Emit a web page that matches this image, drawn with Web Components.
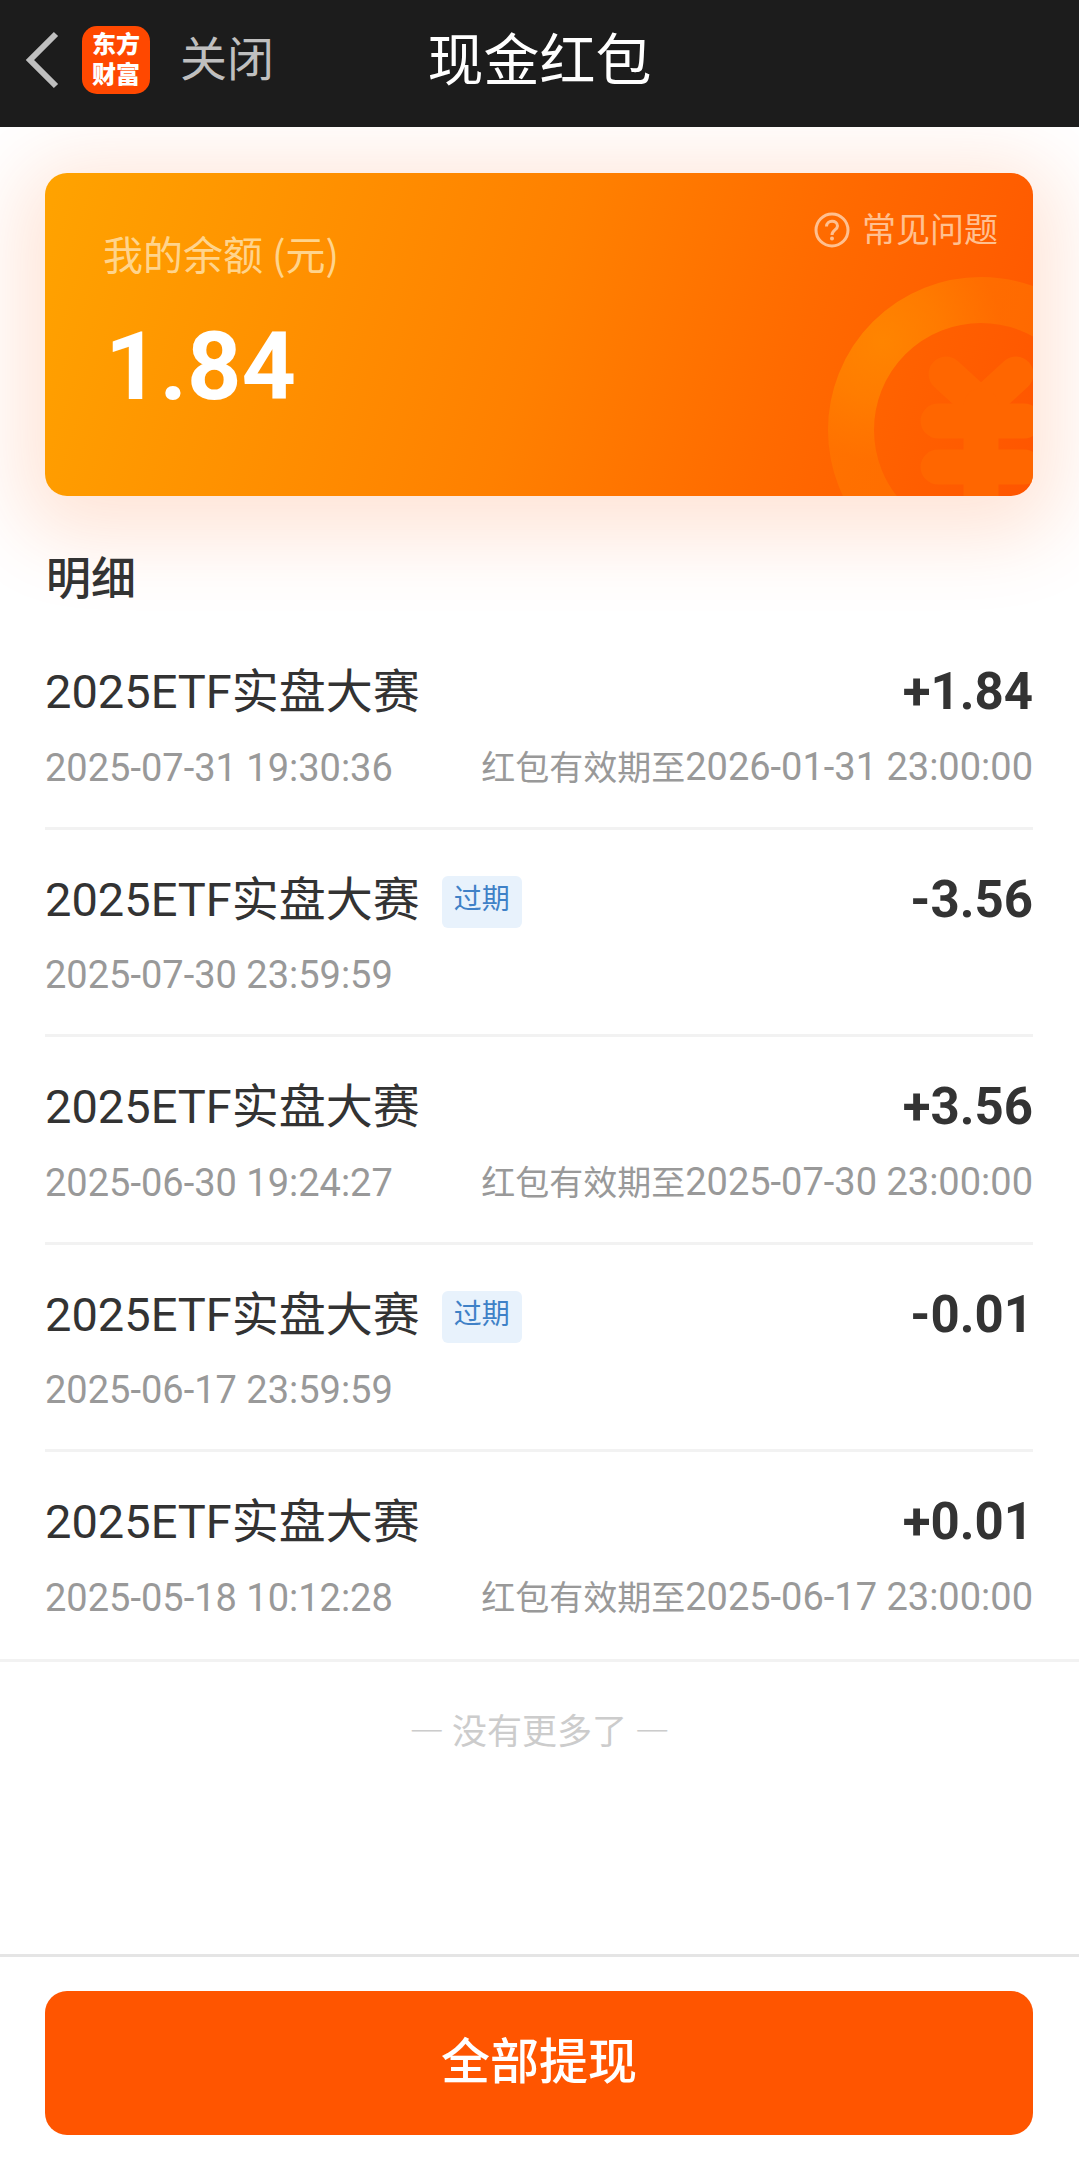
<!DOCTYPE html>
<html lang="zh-CN">
<head>
  <meta charset="utf-8">
  <meta name="viewport" content="width=device-width, initial-scale=1">
  <title>现金红包</title>
  <style>
    body {
      margin: 0;
      background-color: #fff;
      color: #333;
      font-family: Roboto, "Noto Sans CJK SC", sans-serif;
    }
  </style>
</head>
<body>
<cash-page>
  <page-header slot="header">现金红包</page-header>
  <balance-card amount="1.84">我的余额 (元)</balance-card>
  <record-list heading="明细">
    <record-item time="2025-07-31 19:30:36" amount="+1.84" expires="2026-01-31 23:00:00">2025ETF实盘大赛</record-item>
    <record-item time="2025-07-30 23:59:59" amount="-3.56" tag="过期">2025ETF实盘大赛</record-item>
    <record-item time="2025-06-30 19:24:27" amount="+3.56" expires="2025-07-30 23:00:00">2025ETF实盘大赛</record-item>
    <record-item time="2025-06-17 23:59:59" amount="-0.01" tag="过期">2025ETF实盘大赛</record-item>
    <record-item time="2025-05-18 10:12:28" amount="+0.01" expires="2025-06-17 23:00:00">2025ETF实盘大赛</record-item>
  </record-list>
  <withdraw-bar slot="footer">全部提现</withdraw-bar>
</cash-page>

<script>
const makeTemplate = (html) => {
  const template = document.createElement('template');
  template.innerHTML = html;
  return template;
};

const pageTemplate = makeTemplate(`
    <style>
      :host {
        min-height: 100vh;
        display: flex;
        flex-direction: column;
      }

      main {
        flex: 1;
      }
    </style>

    <slot name="header"></slot>
    <main><slot></slot></main>
    <slot name="footer"></slot>
`);

class CashPage extends HTMLElement {
  constructor() {
    super();
    this.attachShadow({ mode: 'open' });
    this.shadowRoot.appendChild(pageTemplate.content.cloneNode(true));
  }
}

const headerTemplate = makeTemplate(`
    <style>
      :host {
        display: block;
        position: relative;
        z-index: 1;
        background-color: #1c1c1c;
      }

      header {
        display: grid;
        grid-template-columns: 1fr auto 1fr;
        align-items: center;
        padding: 24px 24px 31px;
      }

      nav {
        display: flex;
        align-items: center;
      }

      button {
        margin: 0;
        padding: 0;
        border: 0;
        background: none;
        color: #bfbfbf;
        font: inherit;
        font-size: 47px;
        line-height: 72px;
      }

      .back svg {
        display: block;
      }

      .logo {
        width: 68px;
        height: 68px;
        box-sizing: border-box;
        padding: 4px 10px;
        margin: 0 30px 0 22px;
        border-radius: 15px;
        background-color: #ff4800;
        color: #fff;
        font-size: 24px;
        font-weight: 900;
        line-height: 30px;
        text-decoration: none;
      }

      h1 {
        margin: 2px 0 0;
        color: #fff;
        font-size: 56px;
        font-weight: 400;
        line-height: 70px;
      }
    </style>

    <header>
      <nav>
        <button class="back" type="button" aria-label="返回">
          <svg width="36" height="60" viewBox="0 0 36 60" fill="none" stroke="#bfbfbf" stroke-width="6">
            <path d="M32 4 L6 30 L32 56"/>
          </svg>
        </button>
        <a class="logo" href="#">东方财富</a>
        <button type="button">关闭</button>
      </nav>
      <h1><slot></slot></h1>
    </header>
`);

class PageHeader extends HTMLElement {
  constructor() {
    super();
    this.attachShadow({ mode: 'open' });
    this.shadowRoot.appendChild(headerTemplate.content.cloneNode(true));
  }
}

const balanceTemplate = makeTemplate(`
    <style>
      :host {
        display: block;
        padding: 46px 46px 0 45px;
      }

      section {
        position: relative;
        display: flex;
        justify-content: space-between;
        align-items: flex-start;
        min-height: 323px;
        box-sizing: border-box;
        padding: 32px 35px 32px 58px;
        border-radius: 22px;
        background: linear-gradient(108deg, #ffa300 0%, #ff8000 50%, #ff6a00 74%, #ff5500 100%);
        box-shadow: 0 16px 80px 24px rgba(255, 85, 0, 0.16);
      }

      .coin {
        position: absolute;
        right: 0;
        bottom: 0;
        border-bottom-right-radius: 22px;
      }

      h2 {
        margin: 18px 0 0;
        color: #ffd48c;
        font-family: "Noto Sans CJK SC", sans-serif;
        font-size: 40px;
        font-weight: 400;
        line-height: 60px;
      }

      .amount {
        margin: 28px 0 0 2px;
        color: #fff;
        font-size: 95px;
        font-weight: 700;
        line-height: 112px;
      }

      a {
        position: relative;
        display: flex;
        align-items: center;
        gap: 12px;
        color: #ffc090;
        font-size: 34px;
        line-height: 50px;
        text-decoration: none;
      }
    </style>

    <section>
      <svg class="coin" width="206" height="220" viewBox="0 0 206 220" fill="none" aria-hidden="true">
        <defs>
          <radialGradient id="shine" gradientUnits="userSpaceOnUse" cx="56" cy="66" r="120">
            <stop offset="0" stop-color="#ff9a00" stop-opacity="0.6"/>
            <stop offset="0.5" stop-color="#ff9400" stop-opacity="0.5"/>
            <stop offset="1" stop-color="#ff8c00" stop-opacity="0.32"/>
          </radialGradient>
        </defs>
        <circle cx="154" cy="154" r="130" stroke="url(#shine)" stroke-width="46"/>
        <g stroke="#ff6600" stroke-width="35" stroke-linecap="round">
          <path d="M119 98 L154 130 L189 98"/>
          <path d="M111 145 H197 M111 191 H197"/>
          <path d="M154 130 V240"/>
        </g>
      </svg>
      <div>
        <h2><slot></slot></h2>
        <p class="amount"></p>
      </div>
      <a href="#">
        <svg width="36" height="36" viewBox="0 0 36 36" fill="none" stroke="currentColor" stroke-width="3" aria-hidden="true">
          <circle cx="18" cy="18" r="16"/>
          <path d="M12.5 14.5 C12.5 7.5 23.5 7.5 23.5 14 C23.5 18 18 18 18 23"/>
          <circle cx="18" cy="26.5" r="2" fill="currentColor" stroke="none"/>
        </svg>
        <span>常见问题</span>
      </a>
    </section>
`);

class BalanceCard extends HTMLElement {
  constructor() {
    super();
    this.attachShadow({ mode: 'open' });
    this.shadowRoot.appendChild(balanceTemplate.content.cloneNode(true));
    this.$amount = this.shadowRoot.querySelector('.amount');
  }

  connectedCallback() {
    this.$amount.textContent = this.getAttribute('amount');
  }
}

const listTemplate = makeTemplate(`
    <style>
      :host {
        display: block;
        position: relative;
      }

      h2 {
        margin: 50px 46px 8px;
        font-size: 45px;
        font-weight: 500;
        line-height: 68px;
      }

      .records {
        border-bottom: 3px solid #f2f2f2;
      }

      .end {
        margin: 0;
        padding: 40px 0;
        color: #ccc;
        font-family: "Noto Sans CJK SC", sans-serif;
        font-size: 35px;
        line-height: 54px;
        text-align: center;
      }
    </style>

    <h2></h2>
    <div class="records" role="list"><slot></slot></div>
    <p class="end">— 没有更多了 —</p>
`);

class RecordList extends HTMLElement {
  constructor() {
    super();
    this.attachShadow({ mode: 'open' });
    this.shadowRoot.appendChild(listTemplate.content.cloneNode(true));
    this.$heading = this.shadowRoot.querySelector('h2');
  }

  connectedCallback() {
    this.$heading.textContent = this.getAttribute('heading');
  }
}

const itemTemplate = makeTemplate(`
    <style>
      :host {
        display: block;
        margin: 0 46px 0 45px;
        padding: 38px 0 34px;
        border-bottom: 3px solid #f2f2f2;
      }

      :host(:last-of-type) {
        padding-bottom: 36px;
        border-bottom: 0;
      }

      .row {
        display: flex;
        justify-content: space-between;
        align-items: center;
      }

      .name {
        display: flex;
        align-items: center;
        gap: 22px;
        font-size: 47px;
        line-height: 64px;
      }

      .tag {
        padding: 1px 12px 5px;
        margin-top: 4px;
        border-radius: 6px;
        background-color: #e8f2fc;
        color: #3f81c7;
        font-size: 28px;
        line-height: 46px;
      }

      .amount {
        font-size: 51px;
        font-weight: 700;
        line-height: 64px;
      }

      .info {
        margin-top: 19px;
        color: #999;
        font-size: 34px;
        line-height: 49px;
      }

      time {
        font-size: 38px;
      }

      [hidden] {
        display: none;
      }
    </style>

    <div class="row">
      <div class="name"><slot></slot><span class="tag" hidden></span></div>
      <span class="amount"></span>
    </div>
    <div class="row info">
      <time class="created"></time>
      <span class="expires" hidden>红包有效期至<time></time></span>
    </div>
`);

class RecordItem extends HTMLElement {
  constructor() {
    super();
    this.attachShadow({ mode: 'open' });
    this.shadowRoot.appendChild(itemTemplate.content.cloneNode(true));
    this.$tag = this.shadowRoot.querySelector('.tag');
    this.$amount = this.shadowRoot.querySelector('.amount');
    this.$created = this.shadowRoot.querySelector('.created');
    this.$expires = this.shadowRoot.querySelector('.expires');
  }

  connectedCallback() {
    this.setAttribute('role', 'listitem');
    this.$amount.textContent = this.getAttribute('amount');
    this.$created.textContent = this.getAttribute('time');
    if (this.hasAttribute('tag')) {
      this.$tag.textContent = this.getAttribute('tag');
      this.$tag.hidden = false;
    }
    if (this.hasAttribute('expires')) {
      this.$expires.querySelector('time').textContent = this.getAttribute('expires');
      this.$expires.hidden = false;
    }
  }
}

const withdrawTemplate = makeTemplate(`
    <style>
      :host {
        display: block;
        padding: 34px 46px 29px 45px;
        border-top: 3px solid #e5e5e5;
        background-color: #fff;
      }

      button {
        display: block;
        width: 100%;
        margin: 0;
        padding: 36px 0;
        border: 0;
        border-radius: 22px;
        background-color: #ff5500;
        color: #fff;
        font: inherit;
        font-size: 49px;
        font-weight: 500;
        line-height: 72px;
      }
    </style>

    <button type="button"><slot></slot></button>
`);

class WithdrawBar extends HTMLElement {
  constructor() {
    super();
    this.attachShadow({ mode: 'open' });
    this.shadowRoot.appendChild(withdrawTemplate.content.cloneNode(true));
  }
}

customElements.define('cash-page', CashPage);
customElements.define('page-header', PageHeader);
customElements.define('balance-card', BalanceCard);
customElements.define('record-list', RecordList);
customElements.define('record-item', RecordItem);
customElements.define('withdraw-bar', WithdrawBar);
</script>
</body>
</html>
